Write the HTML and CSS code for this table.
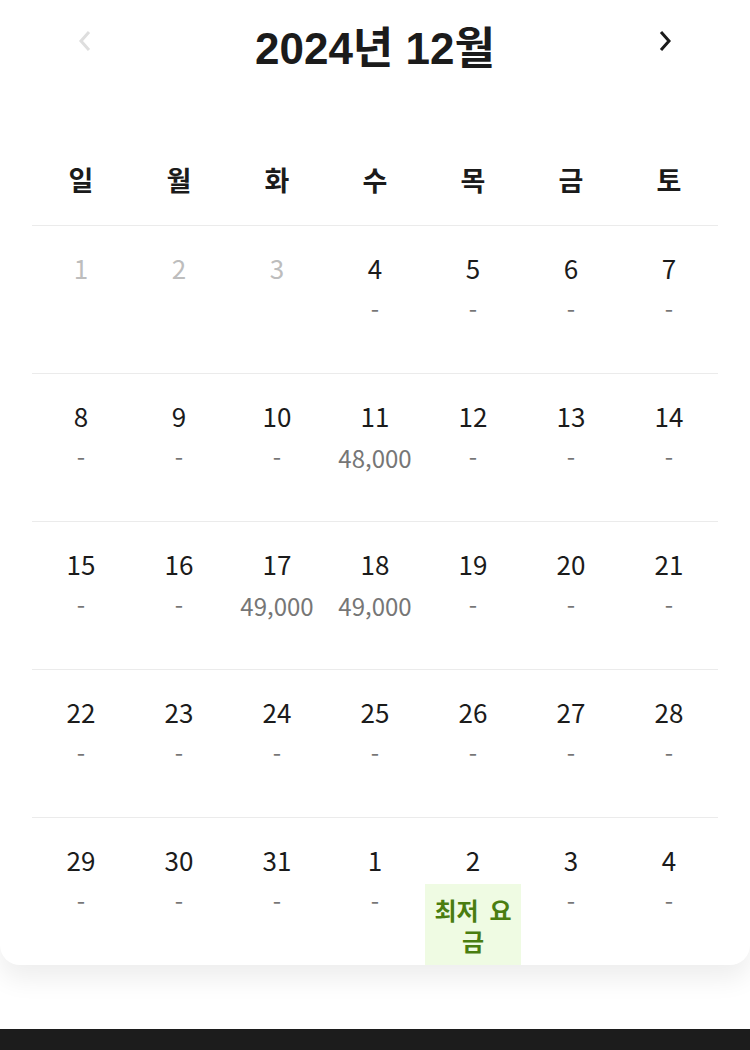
FILE: index.html
```html
<!DOCTYPE html>
<html lang="ko">
<head>
    <meta charset="UTF-8">
    <meta name="viewport" content="width=device-width, initial-scale=1.0">
    <title>요금 캘린더</title>
    <link rel="stylesheet" href="styles.css">
</head>
<body>
    <div class="calendar">
        <div class="calendar-header">
            <button class="nav-button prev" aria-label="이전 달">
                <svg width="16" height="24" viewBox="0 0 16 24"><path d="M12 3 L4 12 L12 21" fill="none" stroke="currentColor" stroke-width="3"/></svg>
            </button>
            <h1 class="month-title">2024년 12월</h1>
            <button class="nav-button next" aria-label="다음 달">
                <svg width="16" height="24" viewBox="0 0 16 24"><path d="M4 3 L12 12 L4 21" fill="none" stroke="currentColor" stroke-width="3"/></svg>
            </button>
        </div>

        <div class="weekdays">
            <div>일</div><div>월</div><div>화</div><div>수</div><div>목</div><div>금</div><div>토</div>
        </div>

        <div class="week">
            <div class="day past"><span class="date">1</span></div>
            <div class="day past"><span class="date">2</span></div>
            <div class="day past"><span class="date">3</span></div>
            <div class="day"><span class="date">4</span><span class="price">-</span></div>
            <div class="day"><span class="date">5</span><span class="price">-</span></div>
            <div class="day"><span class="date">6</span><span class="price">-</span></div>
            <div class="day"><span class="date">7</span><span class="price">-</span></div>
        </div>
        <div class="week">
            <div class="day"><span class="date">8</span><span class="price">-</span></div>
            <div class="day"><span class="date">9</span><span class="price">-</span></div>
            <div class="day"><span class="date">10</span><span class="price">-</span></div>
            <div class="day"><span class="date">11</span><span class="price">48,000</span></div>
            <div class="day"><span class="date">12</span><span class="price">-</span></div>
            <div class="day"><span class="date">13</span><span class="price">-</span></div>
            <div class="day"><span class="date">14</span><span class="price">-</span></div>
        </div>
        <div class="week">
            <div class="day"><span class="date">15</span><span class="price">-</span></div>
            <div class="day"><span class="date">16</span><span class="price">-</span></div>
            <div class="day"><span class="date">17</span><span class="price">49,000</span></div>
            <div class="day"><span class="date">18</span><span class="price">49,000</span></div>
            <div class="day"><span class="date">19</span><span class="price">-</span></div>
            <div class="day"><span class="date">20</span><span class="price">-</span></div>
            <div class="day"><span class="date">21</span><span class="price">-</span></div>
        </div>
        <div class="week">
            <div class="day"><span class="date">22</span><span class="price">-</span></div>
            <div class="day"><span class="date">23</span><span class="price">-</span></div>
            <div class="day"><span class="date">24</span><span class="price">-</span></div>
            <div class="day"><span class="date">25</span><span class="price">-</span></div>
            <div class="day"><span class="date">26</span><span class="price">-</span></div>
            <div class="day"><span class="date">27</span><span class="price">-</span></div>
            <div class="day"><span class="date">28</span><span class="price">-</span></div>
        </div>
        <div class="week">
            <div class="day"><span class="date">29</span><span class="price">-</span></div>
            <div class="day"><span class="date">30</span><span class="price">-</span></div>
            <div class="day"><span class="date">31</span><span class="price">-</span></div>
            <div class="day"><span class="date">1</span><span class="price">-</span></div>
            <div class="day"><span class="date">2</span><span class="price lowest">최저 요금</span></div>
            <div class="day"><span class="date">3</span><span class="price">-</span></div>
            <div class="day"><span class="date">4</span><span class="price">-</span></div>
        </div>
    </div>

    <div class="bottom-bar"></div>
</body>
</html>
```

FILE: styles.css
```css
body {
    margin: 0;
    background-color: #ffffff;
    font-family: "Noto Sans CJK KR", "Noto Sans", sans-serif;
    color: #1b1b1b;
}

.calendar {
    padding: 0 32px;
    background-color: #ffffff;
    border-radius: 0 0 20px 20px;
    box-shadow: 0 14px 26px rgba(0, 0, 0, 0.07);
}

.calendar-header {
    display: flex;
    justify-content: space-between;
    align-items: flex-start;
    padding: 22px 45px 0;
}

.nav-button {
    margin-top: 7px;
    padding: 0;
    border: none;
    background: none;
    cursor: pointer;
    color: #1b1b1b;
    line-height: 0;
}

.nav-button.prev {
    color: #dedede;
}

.month-title {
    margin: 0;
    font-family: "Liberation Sans", "Noto Sans CJK KR", sans-serif;
    font-size: 44px;
    font-weight: bold;
    line-height: 54px;
    color: #1b1b1b;
}

.weekdays {
    display: grid;
    grid-template-columns: repeat(7, 1fr);
    padding: 88px 0 29px;
    font-size: 27px;
    font-weight: bold;
    line-height: 32px;
    text-align: center;
}

.week {
    display: grid;
    grid-template-columns: repeat(7, 1fr);
    min-height: 147px;
    border-top: 1px solid #ebebeb;
}

.day {
    display: flex;
    flex-direction: column;
    align-items: center;
    padding-top: 26px;
}

.date {
    font-size: 26px;
    line-height: 32px;
}

.day.past .date {
    color: #bdbdbd;
}

.price {
    margin-top: 8px;
    padding: 4px 4px;
    font-size: 24px;
    line-height: 28px;
    color: #767676;
}

.price.lowest {
    align-self: stretch;
    margin: 8px 1px 0;
    padding: 10px 4px 9px;
    background-color: #effbe3;
    color: #4a7d10;
    font-weight: bold;
    line-height: 31px;
    text-align: center;
    word-spacing: 4px;
}

.bottom-bar {
    height: 22px;
    margin-top: 64px;
    background-color: #1c1c1c;
}
```
